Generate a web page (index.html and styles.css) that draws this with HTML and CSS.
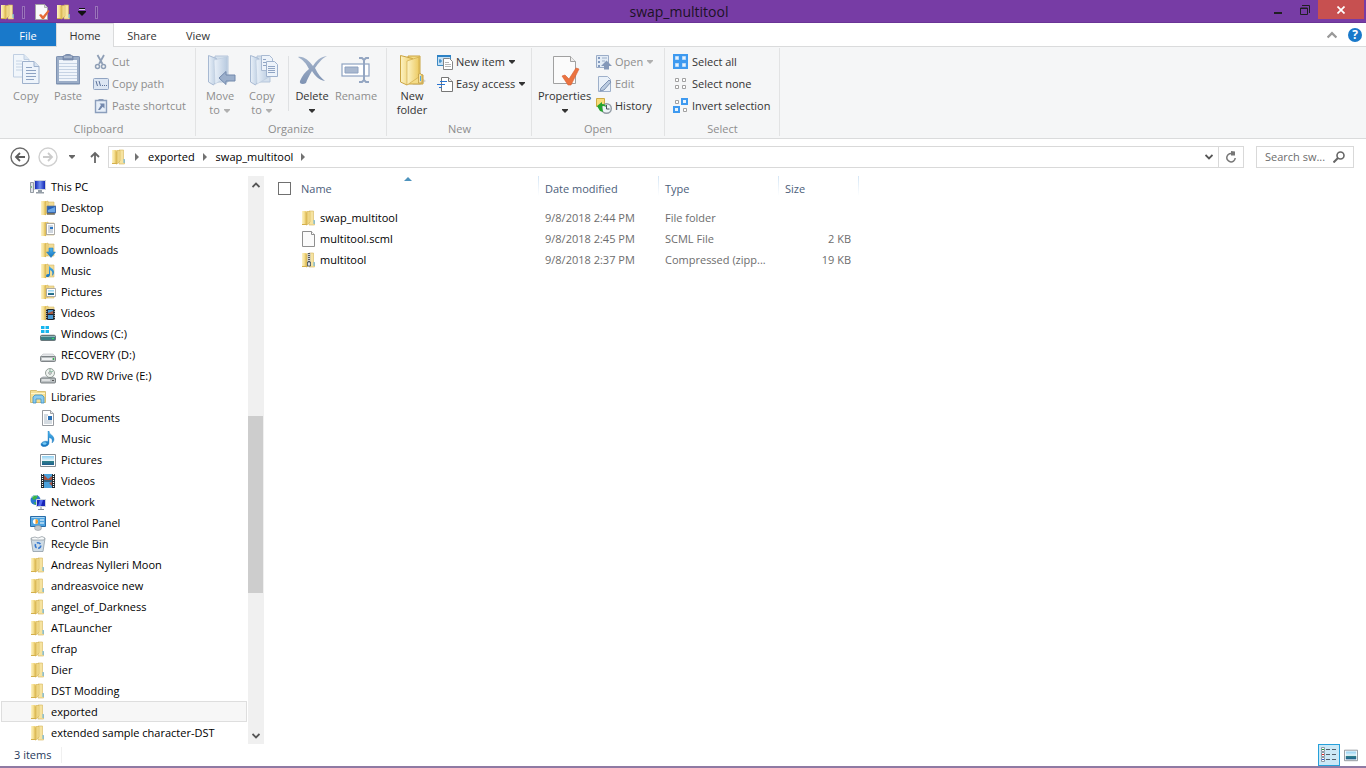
FILE: index.html
```html
<!DOCTYPE html>
<html lang="en">
<head>
<meta charset="utf-8">
<title>swap_multitool</title>
<link rel="stylesheet" href="styles.css">
</head>
<body>
<svg class="defs" aria-hidden="true">
  <defs>
    <linearGradient id="gold" x1="0" x2="1"><stop offset="0" stop-color="#fdf3c4"/><stop offset="1" stop-color="#ecca62"/></linearGradient>
    <linearGradient id="goldDark" x1="0" x2="1"><stop offset="0" stop-color="#ddbb58"/><stop offset="1" stop-color="#f8e6a0"/></linearGradient>
    <linearGradient id="ice" x1="0" x2="1"><stop offset="0" stop-color="#eaf1f9"/><stop offset="1" stop-color="#b9cbe0"/></linearGradient>
    <linearGradient id="slate" x1="0" y1="0" x2="0" y2="1"><stop offset="0" stop-color="#a3b3cb"/><stop offset="1" stop-color="#7f93b3"/></linearGradient>
    <linearGradient id="screen" x1="0" y1="0" x2="1" y2="0"><stop offset="0" stop-color="#0a1fb0"/><stop offset=".5" stop-color="#6f8df0"/><stop offset="1" stop-color="#0a1fb0"/></linearGradient>
    <linearGradient id="blue" x1="0" y1="0" x2="0" y2="1"><stop offset="0" stop-color="#4db4ee"/><stop offset="1" stop-color="#1673bd"/></linearGradient>
    <linearGradient id="sky" x1="0" y1="0" x2="0" y2="1"><stop offset="0" stop-color="#8fd0f2"/><stop offset=".5" stop-color="#e6f5fb"/><stop offset=".6" stop-color="#2f7f8a"/><stop offset="1" stop-color="#1f5f8f"/></linearGradient>
  </defs>
  <symbol id="folder" viewBox="0 0 16 16">
    <path d="M8 1h4.500v9l1 1v4H8z" fill="#f6e3a0" stroke="#d6b75c" stroke-width=".6"/>
    <path d="M1 1h4.500v13.500H1z" fill="url(#gold)"/>
    <path d="M5 2.500l1-1h3V12l-3 3H5z" fill="url(#goldDark)" stroke="#cfab45" stroke-width=".5"/>
    <path d="M12.500 10h1.200v4h-1.200z" fill="#6db6de"/>
    <path d="M1 14.500h5" stroke="#d4b04c"/>
  </symbol>
  <symbol id="halfFolder" viewBox="0 0 16 16">
    <path d="M7 2h7v12H7z" fill="#f1dc97" stroke="#d6b966" stroke-width=".6"/>
    <path d="M1 1h5v14H1z" fill="url(#gold)"/>
    <path d="M5 2l3-1v12l-3 2z" fill="url(#goldDark)" stroke="#cfab45" stroke-width=".5"/>
  </symbol>
  <symbol id="desktop" viewBox="0 0 16 16"><use href="#halfFolder"/><path d="M7 6h9v7H7z" fill="#2560b8" stroke="#6c7c94" stroke-width=".7"/><path d="M8 10l7-3v5H8z" fill="#6ba5e6"/><path d="M7 14h8" stroke="#333"/></symbol>
  <symbol id="docs" viewBox="0 0 16 16"><use href="#halfFolder"/><path d="M6.500 2.500h8v11h-8z" fill="#fff" stroke="#999" stroke-width=".8"/><path d="M8 5h5M8 7h5M8 9h5M8 11h5" stroke="#8798ac" stroke-width=".8"/><path d="M10 6h3v2h-3z" fill="#2d77c4"/></symbol>
  <symbol id="downloads" viewBox="0 0 16 16"><use href="#halfFolder"/><path d="M9 6h4v4h2.500l-4.500 5.500L6.500 10H9z" fill="url(#blue)" stroke="#1b76b9" stroke-width=".5"/></symbol>
  <symbol id="musicFolder" viewBox="0 0 16 16"><use href="#halfFolder"/><path d="M9 2c0 3 5 3 5 7 0 2-1 3-2 4 1-4 0-5-2-6v5c0 2-4 3-4 1s2-2 3-2z" fill="url(#blue)"/></symbol>
  <symbol id="picFolder" viewBox="0 0 16 16"><use href="#halfFolder"/><path d="M6.500 4.500h9v8h-9z" fill="#fff" stroke="#999" stroke-width=".8"/><path d="M8 6h6v5H8z" fill="url(#sky)"/></symbol>
  <symbol id="vidFolder" viewBox="0 0 16 16"><use href="#halfFolder"/><path d="M6 4h9v11H6z" fill="#20262c"/><path d="M8 5h5v4H8zM8 10h5v4H8z" fill="#4b9bd4"/><path d="M8 8l5-2v3H8z" fill="#a65a44"/><path d="M6.700 4v11M14.300 4v11" stroke="#fff" stroke-width=".7" stroke-dasharray="1 1"/></symbol>
  <symbol id="pc" viewBox="0 0 16 16">
    <path d="M.5 3.500h3v10h-3z" fill="#dfe3e8" stroke="#7d868f" stroke-width=".8"/><path d="M1 8h1" stroke="#21a32a"/>
    <path d="M4.500 1.500h11v9h-11z" fill="url(#screen)" stroke="#cfd5dc"/><path d="M8 11h4v2H8zM6 13h8v1.500H6z" fill="#959ea7"/>
  </symbol>
  <symbol id="drive" viewBox="0 0 16 16"><path d="M3 7h10l3 3H0z" fill="#e6e8ea" stroke="#a8adb0" stroke-width=".5"/><rect x=".5" y="9.500" width="15" height="5" rx="1" fill="#b9bec0" stroke="#686f72" stroke-width=".8"/><path d="M2 11h10v2H2z" fill="#eff1f2"/><path d="M13 11h1v2h-1z" fill="#25c443"/></symbol>
  <symbol id="winDrive" viewBox="0 0 16 16"><path d="M1 0h3.500v3H1zM5.500 0H9v3H5.500zM1 4h3.500v3H1zM5.500 4H9v3H5.500z" fill="#16b5ee"/><path d="M0 9.500L2 8h12l2 1.500z" fill="#d9dcde"/><rect x=".5" y="9.500" width="15" height="5" rx="1" fill="#3b7f86" stroke="#5c6669" stroke-width=".8"/><path d="M1 10h14v1H1z" fill="#8fb8ba"/><path d="M12 12h2v1h-2z" fill="#35e062"/></symbol>
  <symbol id="dvd" viewBox="0 0 16 16"><path d="M3 8h10l3 3H0z" fill="#d8dbde"/><circle cx="10" cy="5" r="4.500" fill="#edf1ee" stroke="#8c9691" stroke-width=".9"/><circle cx="10" cy="5" r="1.300" fill="#fff" stroke="#6c7673" stroke-width=".7"/><path d="M10 1v3M13 3l-2 1" stroke="#80b69b"/><rect x=".5" y="10" width="15" height="5" rx="1" fill="#bcc1c3" stroke="#61686b" stroke-width=".8"/><path d="M2 12h8" stroke="#fff"/><path d="M12 12h2v1h-2z" fill="#555"/></symbol>
  <symbol id="libs" viewBox="0 0 16 16"><path d="M.5 1.500h6l1 1h8v11H.5z" fill="#f5e096" stroke="#cfb25c" stroke-width=".8"/><path d="M1 4.500h14" stroke="#fff6cb"/><path d="M3 14V8l2-2h7l2 2v6h-3v-4H6v4z" fill="#8ccbee" stroke="#3a8fc4" stroke-width=".8"/></symbol>
  <symbol id="docPage" viewBox="0 0 16 16"><path d="M2.500.5h8l3 3v12h-11z" fill="#fff" stroke="#8b8f94" stroke-width=".9"/><path d="M10.500.5v3h3" fill="#e6e8ea" stroke="#8b8f94" stroke-width=".8"/><path d="M4 5h4M4 7h3M4 9h3M4 11h8M4 13h8" stroke="#96a4b4" stroke-width=".8"/><path d="M8 6h4v4H8z" fill="#2b71b6"/></symbol>
  <symbol id="note" viewBox="0 0 16 16"><path d="M8 0h1c0 4 5 4 5 8 0 2-1 3-2 4 1-4-1-5-3-5.500V12c0 4-8 5-8 1.500C1 11 5 9.500 8 10.500z" fill="url(#blue)" stroke="#1c78bd" stroke-width=".4"/><ellipse cx="4.500" cy="12.500" rx="2" ry="1.200" fill="#78cbf5"/></symbol>
  <symbol id="picture" viewBox="0 0 16 16"><path d="M.5 2.500h15v12H.5z" fill="#fff" stroke="#858c93"/><path d="M2 4h12v9H2z" fill="url(#sky)"/></symbol>
  <symbol id="film" viewBox="0 0 16 16"><path d="M1 1h14v14H1z" fill="#1f262b"/><path d="M4 1h8v6.500H4zM4 8.500h8V15H4z" fill="#4ca2dc"/><path d="M4 2l4 4 4-3v4H4zM9 10l3-1v4z" fill="#a9513f"/><path d="M2.500 1v14M13.500 1v14" stroke="#fff" stroke-width="1.200" stroke-dasharray="1 1"/></symbol>
  <symbol id="network" viewBox="0 0 16 16"><circle cx="5.500" cy="6" r="5" fill="#2a79d2"/><path d="M2 3c2-2 4-2 6-1L6 5 3 6zM4 8l3 1-2 2z" fill="#3db643"/><path d="M1.500 4C3 1 6 1 7 2" stroke="#d8f2ff" fill="none" stroke-width=".7"/><path d="M6.500 5.500h9v7h-9z" fill="#1826b8" stroke="#ced6df"/><path d="M10 6l3 0-2 6H8z" fill="#536af0"/><path d="M11 13v2M8 15.500h6" stroke="#858e98"/></symbol>
  <symbol id="panel" viewBox="0 0 16 16"><path d="M.5 1.500h15v10H.5z" fill="#4fa4e0" stroke="#2a6ca8"/><path d="M1.500 2.500h13" stroke="#a9d8f6"/><circle cx="5.500" cy="6.500" r="2.600" fill="#fff"/><path d="M5.500 6.500V4a2.500 2.500 0 0 1 0 5z" fill="#f39a20"/><path d="M10 5h4M10 8h4" stroke="#fff"/><ellipse cx="8" cy="13" rx="3.500" ry="2.500" fill="#c4c9cd" stroke="#868d92" stroke-width=".5"/></symbol>
  <symbol id="bin" viewBox="0 0 16 16"><path d="M1 2.500h14l-2 13H3z" fill="#cfdce6" stroke="#8f9ca6" stroke-width=".8"/><path d="M1 2l4-1 3 1 4-1.500 3 1.500-1 2H2z" fill="#f8fafb" stroke="#8a949b" stroke-width=".7"/><circle cx="8" cy="9.500" r="2.700" fill="none" stroke="#3377cf" stroke-width="1.600" stroke-dasharray="4 1.600"/></symbol>
  <symbol id="blank" viewBox="0 0 16 16"><path d="M1.500.5h9l3 3v12h-12z" fill="#fbfbfb" stroke="#8f8f8f"/><path d="M10.500.5v3h3" fill="#fff" stroke="#8f8f8f"/></symbol>
  <symbol id="zip" viewBox="0 0 16 16"><use href="#folder"/><path d="M6.500 1h3v9h-3z" fill="#c9cdd1"/><path d="M8 1v9" stroke="#55585c" stroke-width="2" stroke-dasharray="1 1"/><path d="M6.500 10h3v4h-3z" fill="#dde1e5" stroke="#3a4a5d" stroke-width=".8"/></symbol>
  <symbol id="checkDoc" viewBox="0 0 16 16"><path d="M.5.5h9l3 3v12H.5z" fill="#fafafa" stroke="#a5a5a5"/><path d="M9.500.5v3h3" fill="#ddd" stroke="#a5a5a5" stroke-width=".8"/><path d="M4 11l2-1 2 2 5-6 1.500 1L9 15H7z" fill="#e76a36"/></symbol>

  <symbol id="bigCopy" viewBox="0 0 32 32">
    <path d="M3.500.5H14l5 5V23H3.500z" fill="#f1f6fb" stroke="#c0cfe2"/><path d="M14 .5v5h5" fill="#dbe6f2" stroke="#c0cfe2"/><path d="M6 7h6M6 10h6M6 13h6M6 16h6" stroke="#c6d4e5"/>
    <path d="M12.500 7.500H24l5 5v17H12.500z" fill="#eef4fb" stroke="#9eb1cc"/><path d="M24 7.500v5h5" fill="#d6e2f0" stroke="#9eb1cc"/><path d="M16 13.500h6M16 16.500h10M16 19.500h10M16 22.500h10M16 25.500h8" stroke="#8da2c2"/>
  </symbol>
  <symbol id="bigPaste" viewBox="0 0 32 32">
    <rect x="4" y="2.500" width="24" height="28" rx="1" fill="#7b8fae"/><rect x="4.500" y="2.500" width="23" height="27" rx="1" fill="#9badc7" stroke="#7e92b2"/><path d="M7 6h18v21H7z" fill="#f0f5fb"/><path d="M7 9.500h18M7 12.500h18M7 15.500h18M7 18.500h18M7 21.500h18M7 24.500h18" stroke="#c6d3e4"/><path d="M11 2c2 0 2-2 5-2s3 2 5 2v4H11z" fill="#8295b4" stroke="#667b9e" stroke-width=".6"/><path d="M12 3h8" stroke="#c6d1e0"/>
  </symbol>
  <symbol id="cut" viewBox="0 0 16 16"><path d="M4.500 1l5 9M11 1l-5 9" stroke="#8f9fb6" stroke-width="1.800" fill="none"/><circle cx="4.500" cy="12.500" r="2" fill="none" stroke="#8f9fb6" stroke-width="1.500"/><circle cx="10.500" cy="12.500" r="2" fill="none" stroke="#8f9fb6" stroke-width="1.500"/></symbol>
  <symbol id="path" viewBox="0 0 16 16"><rect x=".5" y="2.500" width="15" height="11" rx="1" fill="#dce6f3" stroke="#91a4c2"/><path d="M3 5l1.500 5M6 5l1.500 5" stroke="#5b7199"/><path d="M9 9.500h1M11 9.500h1M13 9.500h1" stroke="#5b7199"/></symbol>
  <symbol id="shortcut" viewBox="0 0 16 16"><path d="M2.500 2.500h11v12h-11z" fill="#e6eef8" stroke="#8b9ebc" stroke-width="1.400"/><path d="M5.500 1h5v2h-5z" fill="#8b9cb8"/><path d="M6.500 5.500h5v5L9.700 8.700 7 12H5l3-5z" fill="#7388ac"/></symbol>
  <symbol id="bigFolder" viewBox="0 0 32 32">
    <path d="M26 24l4 3-6 4-8 0z" fill="#d2d4d7"/><path d="M12 2h12v18l3 1v9H12z" fill="#f4dc86" stroke="#caa340"/><path d="M4.500 1.500l12 3V26L11 31l-6.500-3z" fill="url(#gold)" stroke="#cba543"/><path d="M11 7l12-4v20l-12 8z" fill="url(#gold)" stroke="#caa340" stroke-width=".6"/><path d="M22.500 20c2-1 3.500 0 3.500 2v7h-3.500z" fill="#f5e0a0" stroke="#bc973b" stroke-width=".7"/><path d="M24.500 22v5" stroke="#55aee2"/>
  </symbol>
  <symbol id="paleFolder" viewBox="0 0 32 32"><path d="M11 2h13v26H11z" fill="#d4e0ed" stroke="#b5c5da"/><path d="M4.500 1.500l8 3V27l-3 4-5-3z" fill="url(#ice)" stroke="#a7b9d2"/><path d="M10 6l13-3v20L11 30z" fill="url(#ice)" stroke="#bac9dc" stroke-width=".6"/></symbol>
  <symbol id="moveTo" viewBox="0 0 32 32"><use href="#paleFolder"/><path d="M15 24l7-6.500v3.500h9v6h-9v3.500z" fill="#9bafcb" stroke="#7389ac"/></symbol>
  <symbol id="copyTo" viewBox="0 0 32 32"><use href="#paleFolder"/><path d="M15.500 1.500h8l3 3v12h-11z" fill="#edf3fa" stroke="#a9bad2"/><path d="M20.500 7.500h8l3 3v12h-11z" fill="#edf3fa" stroke="#9fb2cd"/><path d="M22 12.500h7M22 14.500h7M22 16.500h7M22 18.500h7M17 5.500h3M17 8.500h3M17 11.500h3" stroke="#91a5c4"/></symbol>
  <symbol id="delete" viewBox="0 0 32 32"><path d="M2 3c6-1 11 4 15 9 3-5 7-9 14-10-6 3-9 8-12 12 3 6 6 10 10 13-6-1-10-5-13-10-3 5-5 9-6 12-3 2-7 1-6-2 2-5 5-9 9-12C10 9 7 6 2 3z" fill="url(#slate)"/></symbol>
  <symbol id="rename" viewBox="0 0 32 32"><rect x="2" y="10" width="27" height="12" fill="#fff" stroke="#8ea2c1" stroke-width="1.200"/><path d="M5 13h13v6H5z" fill="#a9b8cf" stroke="#8ea2c1"/><path d="M19 4h3l2 2v20l-2 2h-3M29 4h-3l-2 2v20l2 2h3" fill="none" stroke="#94a6c2" stroke-width="2"/></symbol>
  <symbol id="bigCheck" viewBox="0 0 32 32"><path d="M4.500 2.500h17l5 5v22h-22z" fill="#fbfbfb" stroke="#a1a1a1"/><path d="M21.500 2.500v5h5" fill="#eee" stroke="#a1a1a1"/><path d="M13 22l3-1 4 4 7-11 3 1-8 16h-3z" fill="#eb7340" stroke="#d75e31" stroke-width=".6"/></symbol>
  <symbol id="newItem" viewBox="0 0 16 16"><path d="M.5 1.500h13v10H.5z" fill="#c6e1f5" stroke="#3d89c3"/><path d="M0 1h14v2H0z" fill="#2d82c5"/><path d="M3 5v4M2 7h3" stroke="#257dbd"/><path d="M6.500 4.500h6l3 3v8h-9z" fill="#fff" stroke="#858585"/><path d="M8 8.500h4M8 10.500h6M8 12.500h6" stroke="#a5a5a5" stroke-width=".8"/></symbol>
  <symbol id="access" viewBox="0 0 16 16"><path d="M4.500 1.500h7l4 4v10h-11z" fill="#fff" stroke="#777"/><path d="M11.500 1.500v4h4" fill="#eee" stroke="#777"/><path d="M3 5.500h7M0 8.500h8M2 11.500h3" stroke="#2b74d0"/></symbol>
  <symbol id="open" viewBox="0 0 16 16"><path d="M.5 1.500h12v12H.5z" fill="#e3ecf6" stroke="#9badc8"/><path d="M2 3h2v2H2zM2 7h2v2H2zM2 11h2v2H2z" fill="#839abf"/><path d="M6 4h5M6 7h3" stroke="#9badc8"/><path d="M10.500 6.500L16 12h-3v3.500H8V12H5z" fill="#8498b9"/></symbol>
  <symbol id="edit" viewBox="0 0 16 16"><path d="M2.500.5h9l3 3v12h-12z" fill="#eaf1f9" stroke="#9eb0ca"/><path d="M13 4l2 2-7 8-4 1 1-3z" fill="#bacbe0" stroke="#7e93b4"/></symbol>
  <symbol id="history" viewBox="0 0 16 16"><path d="M.5.5h8v8h-8z" fill="#f8dc79" stroke="#cfaa42"/><circle cx="10.500" cy="10.500" r="4.800" fill="#eef4f7" stroke="#929ba4" stroke-width="1.400"/><path d="M10.500 7v4h3" fill="none" stroke="#46515b"/><path d="M1 8l5-4v2c3 0 4 1 4 3-1-1-2-1-4-1l1 6-3-1z" fill="#25a42e"/></symbol>
  <symbol id="selAll" viewBox="0 0 16 16"><path d="M0 0h15v15H0z" fill="#3e9af0"/><path d="M2.500 2.500h3v3h-3zM9.500 2.500h3v3h-3zM2.500 9.500h3v3h-3zM9.500 9.500h3v3h-3z" fill="#e8f3fd" stroke="#bcdcfa"/></symbol>
  <symbol id="selNone" viewBox="0 0 16 16"><path d="M2.500 2.500h3v3h-3zM9.500 2.500h3v3h-3zM2.500 9.500h3v3h-3zM9.500 9.500h3v3h-3z" fill="#fff" stroke="#a1a1a1"/></symbol>
  <symbol id="invert" viewBox="0 0 16 16"><path d="M8 0h7v7H8zM0 8h7v7H0z" fill="#3e9af0"/><path d="M10 2h3v3h-3zM2 10h3v3H2z" fill="#e8f3fd"/><path d="M2.500 2.500h3v3h-3zM10.500 10.500h3v3h-3z" fill="#fff" stroke="#a1a1a1"/></symbol>
  <symbol id="details" viewBox="0 0 16 16"><path d="M.5.5h3v4h-3zM.5 5.500h3v4h-3zM.5 10.500h3v4h-3z" fill="#fff" stroke="#8d9aa6"/><path d="M1 2h2v1H1z" fill="#1d9a2f"/><path d="M1 7h2v1H1z" fill="#e02525"/><path d="M1 12h2v1H1z" fill="#2554d0"/><path d="M5 2.500h4M11 2.500h4M5 7.500h4M11 7.500h4M5 12.500h4M11 12.500h4" stroke="#52606c"/></symbol>
  <symbol id="tri" viewBox="0 0 8 4"><path d="M1 0h6v1L4 4 1 1z" fill="currentColor"/></symbol>
  <symbol id="crumb" viewBox="0 0 4 8"><path d="M0 0l4 4-4 4z" fill="#727272"/></symbol>
  <symbol id="down" viewBox="0 0 8 6"><path d="M.5 1L4 4.500 7.500 1" fill="none" stroke="currentColor" stroke-width="1.800"/></symbol>
  <symbol id="up" viewBox="0 0 8 6"><path d="M.5 5L4 1.500 7.500 5" fill="none" stroke="currentColor" stroke-width="1.800"/></symbol>
</svg>

<header class="titlebar">
  <div class="quick">
    <svg class="i16"><use href="#folder"/></svg>
    <span class="grip"></span>
    <button class="qbtn" aria-label="Properties"><svg class="i16"><use href="#checkDoc"/></svg></button>
    <button class="qbtn" aria-label="New folder"><svg class="i16"><use href="#folder"/></svg></button>
    <button class="qmore" aria-label="Customize"><svg width="8" height="8" viewBox="0 0 8 8"><path d="M1 .5h6" stroke="#111"/><path d="M1 1.500h6" stroke="#d9c6ea"/><path d="M0 3h8v1L4 8 0 4z" fill="#111"/></svg></button>
    <span class="grip"></span>
  </div>
  <h1 class="title">swap_multitool</h1>
  <div class="winbtns">
    <button class="wbtn" aria-label="Minimize"><svg width="8" height="10" viewBox="0 0 8 10"><path d="M0 7h8v2H0z" fill="#1f1f22"/></svg></button>
    <button class="wbtn" aria-label="Restore"><svg width="10" height="10" viewBox="0 0 10 10"><path d="M2 .5h7.500V8M.5 3v6.500h7V3zM0 3.500h8" fill="none" stroke="#1f1f22"/></svg></button>
    <button class="wbtn close" aria-label="Close"><svg width="8" height="8" viewBox="0 0 8 8"><path d="M.5.5l7 7M7.500.5l-7 7" stroke="#fff" stroke-width="1.700"/></svg></button>
  </div>
</header>

<nav class="tabs">
  <button class="tab file">File</button>
  <button class="tab active">Home</button>
  <button class="tab">Share</button>
  <button class="tab">View</button>
  <div class="tabtools">
    <button class="plain" aria-label="Collapse ribbon"><svg class="caret gray"><use href="#up"/></svg></button>
    <button class="help" aria-label="Help">?</button>
  </div>
</nav>

<section class="ribbon">
  <div class="group g-clip">
    <div class="tools">
      <button class="big" disabled><svg class="i32"><use href="#bigCopy"/></svg><span>Copy</span></button>
      <button class="big" disabled><svg class="i32"><use href="#bigPaste"/></svg><span>Paste</span></button>
      <div class="stack">
        <button class="small" disabled><svg class="i16"><use href="#cut"/></svg>Cut</button>
        <button class="small" disabled><svg class="i16"><use href="#path"/></svg>Copy path</button>
        <button class="small" disabled><svg class="i16"><use href="#shortcut"/></svg>Paste shortcut</button>
      </div>
    </div>
    <h2>Clipboard</h2>
  </div>
  <div class="group g-org">
    <div class="tools">
      <button class="big" disabled><svg class="i32"><use href="#moveTo"/></svg><span>Move<br>to <svg class="tri"><use href="#tri"/></svg></span></button>
      <button class="big" disabled><svg class="i32"><use href="#copyTo"/></svg><span>Copy<br>to <svg class="tri"><use href="#tri"/></svg></span></button>
      <i class="rule"></i>
      <button class="big"><svg class="i32"><use href="#delete"/></svg><span>Delete<br><svg class="tri"><use href="#tri"/></svg></span></button>
      <button class="big wide" disabled><svg class="i32"><use href="#rename"/></svg><span>Rename</span></button>
    </div>
    <h2>Organize</h2>
  </div>
  <div class="group g-new">
    <div class="tools">
      <button class="big"><svg class="i32"><use href="#bigFolder"/></svg><span>New<br>folder</span></button>
      <div class="stack">
        <button class="small"><svg class="i16"><use href="#newItem"/></svg>New item <svg class="tri"><use href="#tri"/></svg></button>
        <button class="small"><svg class="i16"><use href="#access"/></svg>Easy access <svg class="tri"><use href="#tri"/></svg></button>
      </div>
    </div>
    <h2>New</h2>
  </div>
  <div class="group g-open">
    <div class="tools">
      <button class="big wider"><svg class="i32"><use href="#bigCheck"/></svg><span>Properties<br><svg class="tri"><use href="#tri"/></svg></span></button>
      <div class="stack">
        <button class="small" disabled><svg class="i16"><use href="#open"/></svg>Open <svg class="tri"><use href="#tri"/></svg></button>
        <button class="small" disabled><svg class="i16"><use href="#edit"/></svg>Edit</button>
        <button class="small"><svg class="i16"><use href="#history"/></svg>History</button>
      </div>
    </div>
    <h2>Open</h2>
  </div>
  <div class="group g-sel">
    <div class="tools">
      <div class="stack">
        <button class="small"><svg class="i16"><use href="#selAll"/></svg>Select all</button>
        <button class="small"><svg class="i16"><use href="#selNone"/></svg>Select none</button>
        <button class="small"><svg class="i16"><use href="#invert"/></svg>Invert selection</button>
      </div>
    </div>
    <h2>Select</h2>
  </div>
</section>

<section class="address">
  <button class="plain" aria-label="Back"><svg width="20" height="20" viewBox="0 0 20 20"><circle cx="10" cy="10" r="9" fill="#fff" stroke="#6c6c6c" stroke-width="1.400"/><path d="M15 10H6M10 6l-4 4 4 4" fill="none" stroke="#5c5c5c" stroke-width="1.800"/></svg></button>
  <button class="plain" aria-label="Forward"><svg width="20" height="20" viewBox="0 0 20 20"><circle cx="10" cy="10" r="9" fill="#fff" stroke="#d0d0d0" stroke-width="1.400"/><path d="M5 10h9M10 6l4 4-4 4" fill="none" stroke="#cbcbcb" stroke-width="1.800"/></svg></button>
  <button class="plain recent" aria-label="Recent locations"><svg class="tri"><use href="#tri"/></svg></button>
  <button class="plain upbtn" aria-label="Up"><svg width="10" height="12" viewBox="0 0 10 12"><path d="M5 12V2M1 6l4-4 4 4" fill="none" stroke="#666" stroke-width="1.800"/></svg></button>
  <div class="crumbs">
    <svg class="i16"><use href="#folder"/></svg>
    <svg class="crumb"><use href="#crumb"/></svg><a href="#">exported</a>
    <svg class="crumb"><use href="#crumb"/></svg><a href="#">swap_multitool</a>
    <svg class="crumb"><use href="#crumb"/></svg>
    <button class="plain drop" aria-label="Previous locations"><svg class="caret"><use href="#down"/></svg></button>
    <button class="plain refresh" aria-label="Refresh"><svg width="12" height="12" viewBox="0 0 12 12"><path d="M8 3A4.200 4.200 0 1 0 10.200 7" fill="none" stroke="#777" stroke-width="1.500"/><path d="M6 0l4 .5v4H6z" fill="#777"/></svg></button>
  </div>
  <label class="search">
    <input type="text" placeholder="Search sw..." aria-label="Search swap_multitool">
    <svg width="12" height="12" viewBox="0 0 12 12"><circle cx="7.500" cy="4.500" r="3.500" fill="none" stroke="#666" stroke-width="1.600"/><path d="M5 7l-4.500 4.500" stroke="#666" stroke-width="2"/></svg>
  </label>
</section>

<main class="body">
  <nav class="tree">
    <a class="node" href="#"><svg class="i16"><use href="#pc"/></svg>This PC</a>
    <a class="node sub" href="#"><svg class="i16"><use href="#desktop"/></svg>Desktop</a>
    <a class="node sub" href="#"><svg class="i16"><use href="#docs"/></svg>Documents</a>
    <a class="node sub" href="#"><svg class="i16"><use href="#downloads"/></svg>Downloads</a>
    <a class="node sub" href="#"><svg class="i16"><use href="#musicFolder"/></svg>Music</a>
    <a class="node sub" href="#"><svg class="i16"><use href="#picFolder"/></svg>Pictures</a>
    <a class="node sub" href="#"><svg class="i16"><use href="#vidFolder"/></svg>Videos</a>
    <a class="node sub" href="#"><svg class="i16"><use href="#winDrive"/></svg>Windows (C:)</a>
    <a class="node sub" href="#"><svg class="i16"><use href="#drive"/></svg>RECOVERY (D:)</a>
    <a class="node sub" href="#"><svg class="i16"><use href="#dvd"/></svg>DVD RW Drive (E:)</a>
    <a class="node" href="#"><svg class="i16"><use href="#libs"/></svg>Libraries</a>
    <a class="node sub" href="#"><svg class="i16"><use href="#docPage"/></svg>Documents</a>
    <a class="node sub" href="#"><svg class="i16"><use href="#note"/></svg>Music</a>
    <a class="node sub" href="#"><svg class="i16"><use href="#picture"/></svg>Pictures</a>
    <a class="node sub" href="#"><svg class="i16"><use href="#film"/></svg>Videos</a>
    <a class="node" href="#"><svg class="i16"><use href="#network"/></svg>Network</a>
    <a class="node" href="#"><svg class="i16"><use href="#panel"/></svg>Control Panel</a>
    <a class="node" href="#"><svg class="i16"><use href="#bin"/></svg>Recycle Bin</a>
    <a class="node" href="#"><svg class="i16"><use href="#folder"/></svg>Andreas Nylleri Moon</a>
    <a class="node" href="#"><svg class="i16"><use href="#folder"/></svg>andreasvoice new</a>
    <a class="node" href="#"><svg class="i16"><use href="#folder"/></svg>angel_of_Darkness</a>
    <a class="node" href="#"><svg class="i16"><use href="#folder"/></svg>ATLauncher</a>
    <a class="node" href="#"><svg class="i16"><use href="#folder"/></svg>cfrap</a>
    <a class="node" href="#"><svg class="i16"><use href="#folder"/></svg>Dier</a>
    <a class="node" href="#"><svg class="i16"><use href="#folder"/></svg>DST Modding</a>
    <a class="node current" href="#"><svg class="i16"><use href="#folder"/></svg>exported</a>
    <a class="node" href="#"><svg class="i16"><use href="#folder"/></svg>extended sample character-DST</a>
  </nav>
  <div class="scroll">
    <button class="plain arrow" aria-label="Scroll up"><svg class="caret"><use href="#up"/></svg></button>
    <div class="track"><i class="before"></i><i class="thumb"></i><i class="after"></i></div>
    <button class="plain arrow" aria-label="Scroll down"><svg class="caret"><use href="#down"/></svg></button>
  </div>
  <div class="files">
    <table>
      <colgroup><col class="c-name"><col class="c-mid"><col class="c-mid"><col class="c-size"></colgroup>
      <thead>
        <tr>
          <th class="h-name"><div class="namecell head"><input type="checkbox" aria-label="Select all items">Name</div><svg class="sort" width="8" height="4" viewBox="0 0 8 4"><path d="M0 4l4-4 4 4z" fill="#4e93bd"/></svg></th>
          <th>Date modified</th><th>Type</th><th>Size</th>
        </tr>
      </thead>
      <tbody>
        <tr><td><div class="namecell"><svg class="i16"><use href="#folder"/></svg>swap_multitool</div></td><td>9/8/2018 2:44 PM</td><td>File folder</td><td class="num"></td></tr>
        <tr><td><div class="namecell"><svg class="i16"><use href="#blank"/></svg>multitool.scml</div></td><td>9/8/2018 2:45 PM</td><td>SCML File</td><td class="num">2 KB</td></tr>
        <tr><td><div class="namecell"><svg class="i16"><use href="#zip"/></svg>multitool</div></td><td>9/8/2018 2:37 PM</td><td>Compressed (zipp...</td><td class="num">19 KB</td></tr>
      </tbody>
    </table>
  </div>
</main>

<footer class="status">
  <span class="count">3 items</span>
  <div class="views">
    <button class="view on" aria-label="Details view"><svg class="i16"><use href="#details"/></svg></button>
    <button class="view" aria-label="Large icons view"><svg width="14" height="14"><use href="#picture"/></svg></button>
  </div>
</footer>
<div class="taskbar"></div>
</body>
</html>
```
FILE: styles.css
```css
* { box-sizing: border-box; }
body {
  margin: 0;
  height: 100vh;
  display: flex;
  flex-direction: column;
  overflow: hidden;
  background: #fff;
  color: #000;
  font: 11px/16px "Open Sans", "Noto Sans", sans-serif;
}
button, input { font: inherit; color: inherit; }
button { border: 0; padding: 0; background: none; white-space: nowrap; }
svg { display: block; flex: none; }
a { color: inherit; text-decoration: none; }
h1, h2 { margin: 0; font-weight: 400; }
.defs { position: absolute; width: 0; height: 0; }
.i16 { width: 16px; height: 16px; }
.i32 { width: 32px; height: 32px; }
.tri { width: 8px; height: 4px; display: inline-block; vertical-align: middle; }
.caret { width: 8px; height: 6px; color: #555; }
.gray { width: 10px; height: 8px; color: #999; }
.plain { display: flex; align-items: center; justify-content: center; }

.titlebar {
  display: grid;
  grid-template-columns: 1fr auto 1fr;
  height: 23px;
  padding-right: 2px;
  background: #773ca5;
  border-bottom: 1px solid #6a3496;
}
.quick { display: flex; align-items: center; gap: 5px; padding-top: 1px; }
.grip { width: 3px; height: 13px; margin: 0 5px 0 1px; border: 1px solid #9a73ba; background: #6a3496; }
.qmore { margin: 0 3px 0 1px; }
.title { padding-right: 6px; font-size: 14px; line-height: 23px; color: #1c1226; }
.winbtns { display: flex; justify-content: flex-end; align-items: flex-start; }
.wbtn { width: 27px; height: 19px; display: flex; align-items: center; justify-content: center; }
.close { width: 46px; background: #c75050; }

.tabs { display: flex; height: 24px; border-bottom: 1px solid #dadbdc; }
.tab { width: 56px; padding-top: 2px; color: #333; }
.file { background: #1979ca; color: #fff; }
.active { width: 58px; height: 24px; padding-top: 1px; background: #f5f6f7; border: 1px solid #dadbdc; border-bottom: 0; }
.tabtools { display: flex; align-items: center; gap: 11px; margin-left: auto; padding-right: 4px; }
.help { width: 14px; height: 14px; border-radius: 50%; background: #1979ca; color: #fff; font-size: 12px; font-weight: 700; line-height: 14px; }

.ribbon { display: flex; height: 92px; padding: 1px 0 2px; background: #f5f6f7; border-bottom: 1px solid #dadbdc; }
.group { display: flex; flex-direction: column; padding: 3px 3px 0; border-right: 1px solid #e2e3e4; }
.group h2 { margin-top: 4px; font-size: 11px; text-align: center; color: #8d8d8d; }
.g-clip { width: 196px; padding-left: 5px; }
.g-org { width: 191px; }
.g-new { width: 145px; padding-left: 4px; }
.g-open { width: 133px; }
.g-sel { width: 115px; padding-left: 4px; }
.tools { display: flex; height: 66px; }
.big { display: flex; flex-direction: column; align-items: center; gap: 3px; width: 42px; padding-top: 3px; line-height: 14px; color: #333; }
.wide { width: 46px; }
.wider { width: 59px; }
.rule { width: 1px; margin: 5px 2px 6px 5px; background: #dfe1e3; }
.stack { display: flex; flex-direction: column; padding-left: 4px; }
.g-open .stack { padding-left: 2px; }
.small { display: flex; align-items: center; gap: 3px; height: 22px; color: #333; }
.big:disabled, .small:disabled { color: #8d8d8d; }
.small:disabled .tri, .big:disabled .tri { color: #b0b0b0; }

.address { display: flex; align-items: center; height: 37px; padding: 0 12px 2px 10px; }
.address > .plain:first-child { margin-right: 8px; }
.recent { width: 8px; margin-left: 10px; color: #666; }
.upbtn { width: 10px; margin: 0 8px 0 14px; }
.crumbs { flex: 1; display: flex; align-items: center; height: 22px; padding-left: 2px; border: 1px solid #d9d9d9; }
.crumb { width: 4px; height: 8px; margin: 0 9px 0 8px; }
.drop { margin-left: auto; width: 18px; height: 20px; }
.refresh { width: 25px; height: 20px; border-left: 1px solid #d9d9d9; }
.search { display: flex; align-items: center; width: 98px; height: 22px; margin-left: 12px; padding: 0 8px; border: 1px solid #d9d9d9; }
.search input { flex: 1; min-width: 0; padding: 0; border: 0; outline: 0; background: none; }
.search input::placeholder { color: #6d6d6d; opacity: 1; }

.body { flex: 1; display: flex; min-height: 0; }
.tree { width: 248px; overflow: hidden; }
.node { display: flex; align-items: center; gap: 5px; height: 21px; margin: 0 1px; padding-left: 29px; white-space: nowrap; }
.sub { padding-left: 39px; }
.current { padding-left: 28px; background: #f7f7f7; border: 1px solid #dedede; }
.scroll { display: flex; flex-direction: column; width: 16px; background: #f0f0f0; }
.arrow { height: 17px; }
.track { flex: 1; display: flex; flex-direction: column; }
.before { flex: 223; }
.thumb { flex: 176; margin-right: 1px; background: #cdcdcd; }
.after { flex: 134; }
.files { flex: 1; padding-left: 1px; }
table { table-layout: fixed; width: 594px; border-collapse: collapse; }
.c-name { width: 274px; }
.c-mid { width: 120px; }
.c-size { width: 80px; }
th, td { padding: 0 8px 0 6px; text-align: left; font-weight: 400; white-space: nowrap; }
th {
  position: relative;
  height: 31px;
  padding-bottom: 6px;
  color: #4c607a;
  background: linear-gradient(#d5e6f5, #fff) right top / 1px 20px no-repeat;
}
td { height: 21px; color: #6d6d6d; }
.namecell { display: flex; align-items: center; gap: 3px; padding-left: 30px; color: #000; }
.head { gap: 10px; padding-left: 7px; color: #4c607a; }
.head input { appearance: none; width: 13px; height: 13px; margin: 0; border: 1px solid #707070; background: #fff; }
.sort { position: absolute; top: 1px; left: 139px; }
.num { text-align: right; }

.status { display: flex; align-items: center; height: 22px; padding-right: 4px; color: #1e395b; }
.count { padding: 0 10px 0 14px; border-right: 1px solid #f0f0f0; }
.views { display: flex; margin-left: auto; }
.view { width: 22px; height: 22px; display: flex; align-items: center; justify-content: center; }
.on { background: #cbe8f6; border: 1px solid #26a0da; }
.taskbar { height: 2px; background: #8f7aa3; }
```
